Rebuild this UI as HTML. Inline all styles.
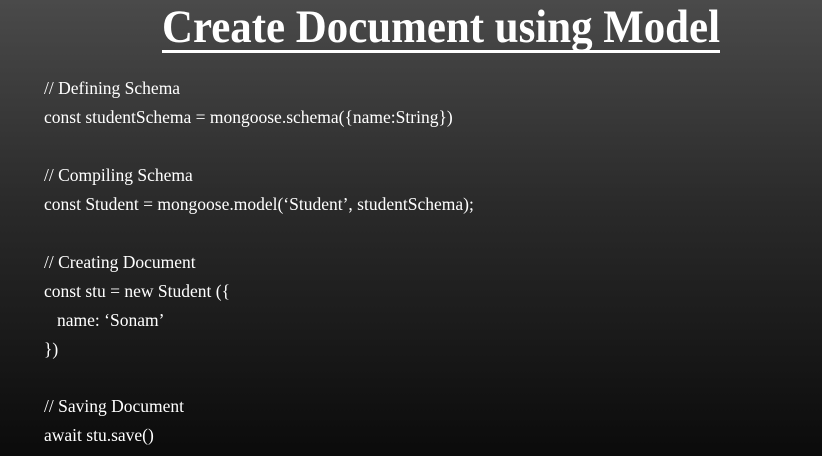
<!DOCTYPE html>
<html><head><meta charset="utf-8"><style>
html,body{margin:0;padding:0}
body{width:822px;height:456px;overflow:hidden;position:relative;background:linear-gradient(180deg,#4a4a4a 0%,#2a2a2a 45%,#0b0b0b 100%);font-family:"Liberation Serif",serif;color:#fff}
.t{position:absolute;left:162px;top:4px;font-size:47px;font-weight:bold;line-height:1;white-space:nowrap;transform-origin:0 0}
.u{position:absolute;left:162px;top:50px;width:558px;height:3px;background:#fff}
.l{position:absolute;left:44px;font-size:17.5px;line-height:1;white-space:nowrap;transform-origin:0 0}
</style></head><body>
<div class="t" id="t">Create Document using Model</div>
<div class="u"></div>
<div class="l" style="top:80px">// Defining Schema</div>
<div class="l" style="top:109px">const studentSchema = mongoose.schema({name:String})</div>
<div class="l" style="top:167px">// Compiling Schema</div>
<div class="l" style="top:196px">const Student = mongoose.model(‘Student’, studentSchema);</div>
<div class="l" style="top:254px">// Creating Document</div>
<div class="l" style="top:283px">const stu = new Student ({</div>
<div class="l" style="top:312px;left:57px">name: ‘Sonam’</div>
<div class="l" style="top:341px">})</div>
<div class="l" style="top:398px">// Saving Document</div>
<div class="l" style="top:427px">await stu.save()</div>
<script>
var t=document.getElementById('t');var w=t.getBoundingClientRect().width;t.style.transform='scaleX('+(558/w)+')';
</script>
</body></html>
